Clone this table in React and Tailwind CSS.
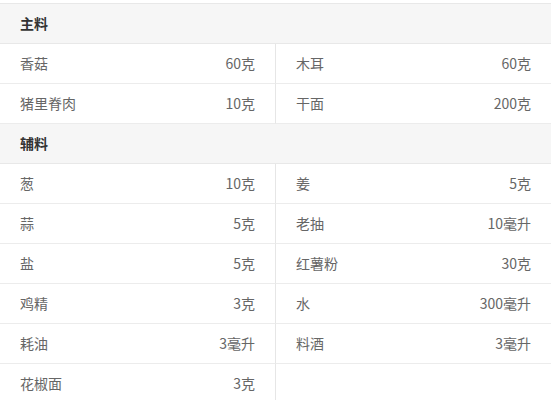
import React from "react";

const sections = [
  {
    title: "主料",
    items: [
      ["香菇", "60克"],
      ["木耳", "60克"],
      ["猪里脊肉", "10克"],
      ["干面", "200克"],
    ],
  },
  {
    title: "辅料",
    items: [
      ["葱", "10克"],
      ["姜", "5克"],
      ["蒜", "5克"],
      ["老抽", "10毫升"],
      ["盐", "5克"],
      ["红薯粉", "30克"],
      ["鸡精", "3克"],
      ["水", "300毫升"],
      ["耗油", "3毫升"],
      ["料酒", "3毫升"],
      ["花椒面", "3克"],
      null,
    ],
  },
];

const Cell = ({ item, left }) => (
  <div className={`h-10 flex items-center justify-between px-5 border-b border-[#ececec] ${left ? "border-r border-r-[#e6e6e6]" : ""}`}>
    {item && (
      <>
        <span>{item[0]}</span>
        <span>{item[1]}</span>
      </>
    )}
  </div>
);

const App = () => {
  return (
    <div
      className="w-[551px] h-[400px] overflow-hidden bg-white pt-[3px] text-[14px] text-[#666]"
      style={{ fontFamily: '"Noto Sans CJK SC", "Liberation Sans", sans-serif' }}
    >
      {sections.map((section, i) => (
        <div key={section.title}>
          {/* 分类标题 */}
          <div className={`h-10 flex items-center px-5 bg-[#f6f6f6] border-b border-[#e8e8e8] font-bold text-[#333] ${i === 0 ? "border-t h-[41px]" : ""}`}>
            {section.title}
          </div>
          <div className="grid grid-cols-[276px_275px]">
            {section.items.map((item, j) => (
              <Cell key={j} item={item} left={j % 2 === 0} />
            ))}
          </div>
        </div>
      ))}
    </div>
  );
};

export default App;
